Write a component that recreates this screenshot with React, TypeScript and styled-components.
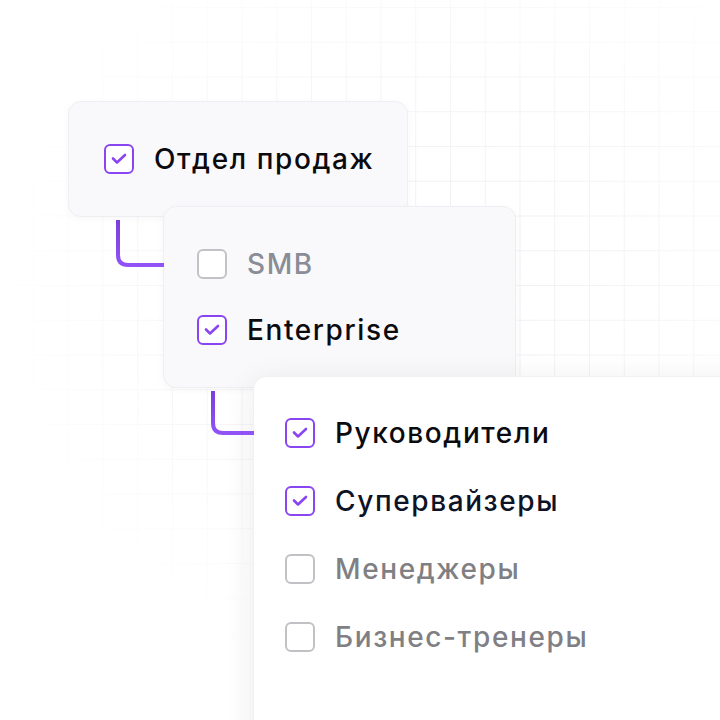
import React from "react";
import styled, { createGlobalStyle } from "styled-components";

const Global = createGlobalStyle`
  html, body { margin: 0; padding: 0; background: #ffffff; }
  body { font-family: Inter, "Noto Sans", sans-serif; }
`;

const Page = styled.div`
  position: relative;
  width: 720px;
  height: 720px;
  overflow: hidden;
  background: #ffffff;
  &::before {
    content: "";
    position: absolute;
    inset: 0;
    background-image:
      linear-gradient(to right, #ececf0 1px, transparent 1px),
      linear-gradient(to bottom, #ececf0 1px, transparent 1px);
    background-size: 34.75px 34.75px;
    background-position: 33px 7px;
    -webkit-mask-image: radial-gradient(ellipse 62% 55% at 60% 40%, rgba(0,0,0,0.9) 0%, rgba(0,0,0,0.5) 55%, transparent 100%);
    mask-image: radial-gradient(ellipse 62% 55% at 60% 40%, rgba(0,0,0,0.9) 0%, rgba(0,0,0,0.5) 55%, transparent 100%);
  }
`;

const Stack = styled.div`
  position: relative;
  display: flex;
  flex-direction: column;
  align-items: flex-start;
  padding-top: 101px;
`;

const Card = styled.div<{ $left: number; $overlap: number; $variant: "soft" | "white"; $width: number; $padX: number; $padY: number; $gap: number }>`
  position: relative;
  box-sizing: border-box;
  margin-left: ${(p) => p.$left}px;
  margin-top: ${(p) => -p.$overlap}px;
  width: ${(p) => p.$width}px;
  padding: ${(p) => p.$padY}px ${(p) => p.$padX}px;
  display: flex;
  flex-direction: column;
  gap: ${(p) => p.$gap}px;
  border-radius: 13px;
  background: ${(p) => (p.$variant === "soft" ? "#f9f9fb" : "#ffffff")};
  border: 1px solid ${(p) => (p.$variant === "soft" ? "#efeff3" : "#f1f1f4")};
  box-shadow: ${(p) =>
    p.$variant === "soft"
      ? "0 2px 10px rgba(30, 30, 60, 0.03)"
      : "0 6px 32px rgba(30, 30, 60, 0.09)"};
`;

const Row = styled.div`
  display: flex;
  align-items: center;
  gap: 20px;
  height: 30px;
`;

const Box = styled.span<{ $checked: boolean }>`
  box-sizing: border-box;
  flex: 0 0 30px;
  width: 30px;
  height: 30px;
  border-radius: 6px;
  border: 2.6px solid ${(p) => (p.$checked ? "#8a45f2" : "#c2c2c6")};
  display: flex;
  align-items: center;
  justify-content: center;
  background: #ffffff;
`;

const Label = styled.span<{ $tone: "dark" | "navy" | "muted" | "slate" }>`
  font-family: Inter, "Noto Sans", sans-serif;
  font-size: 28px;
  font-weight: 500;
  letter-spacing: 1.6px;
  line-height: 30px;
  white-space: nowrap;
  color: ${(p) =>
    p.$tone === "dark"
      ? "#0b0b0f"
      : p.$tone === "navy"
      ? "#0e1326"
      : p.$tone === "slate"
      ? "#8a8d96"
      : "#7f7f84"};
`;

const Connector = styled.svg<{ $x: number; $y: number }>`
  position: absolute;
  left: ${(p) => p.$x}px;
  top: ${(p) => p.$y}px;
  overflow: visible;
`;

const BottomSpace = styled.div`
  height: 40px;
`;

type Item = { label: string; checked: boolean; tone: "dark" | "navy" | "muted" | "slate" };

const CheckItem = ({ label, checked, tone }: Item) => (
  <Row>
    <Box $checked={checked}>
      {checked && (
        <svg width="16" height="12" viewBox="0 0 16 12" fill="none">
          <path d="M2 5.5 L6 9.5 L14 2" stroke="#8a45f2" strokeWidth="2.6" strokeLinecap="round" strokeLinejoin="round" />
        </svg>
      )}
    </Box>
    <Label $tone={tone}>{label}</Label>
  </Row>
);

const Elbow = ({ x, y, h, w }: { x: number; y: number; h: number; w: number }) => (
  <Connector $x={x} $y={y} width={w} height={h}>
    <defs>
      <linearGradient id={`g${x}${y}`} x1="0" y1="0" x2="0" y2="1">
        <stop offset="0" stopColor="#7a3fd9" />
        <stop offset="1" stopColor="#9152f7" />
      </linearGradient>
    </defs>
    <path
      d={`M2 0 L2 ${h - 12} Q2 ${h - 2} 12 ${h - 2} L${w} ${h - 2}`}
      stroke={`url(#g${x}${y})`}
      strokeWidth="4"
      fill="none"
    />
  </Connector>
);

export default function App() {
  return (
    <>
      <Global />
      <Page>
        <Stack>
          <Card $left={68} $overlap={0} $variant="soft" $width={340} $padX={35} $padY={42} $gap={0}>
            <CheckItem label="Отдел продаж" checked tone="dark" />
          </Card>
          <Card $left={163} $overlap={11} $variant="soft" $width={353} $padX={33} $padY={42} $gap={36}>
            <Elbow x={-48} y={13} h={47} w={48} />
            <CheckItem label="SMB" checked={false} tone="slate" />
            <CheckItem label="Enterprise" checked tone="dark" />
          </Card>
          <Card $left={253} $overlap={12} $variant="white" $width={500} $padX={31} $padY={41} $gap={38}>
            <Elbow x={-43} y={14} h={44} w={43} />
            <CheckItem label="Руководители" checked tone="dark" />
            <CheckItem label="Супервайзеры" checked tone="navy" />
            <CheckItem label="Менеджеры" checked={false} tone="muted" />
            <CheckItem label="Бизнес-тренеры" checked={false} tone="muted" />
            <BottomSpace />
          </Card>
        </Stack>
      </Page>
    </>
  );
}
